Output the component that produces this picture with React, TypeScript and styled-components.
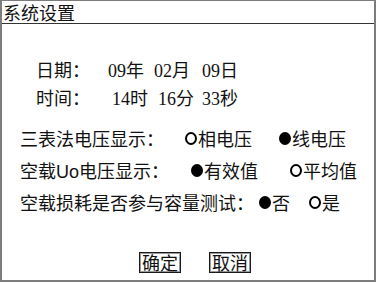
import React from "react";
import styled, { createGlobalStyle } from "styled-components";

const GlobalStyle = createGlobalStyle`
  html, body {
    margin: 0;
    padding: 0;
    background: #ffffff;
  }
  body {
    font-family: "Noto Sans CJK SC", "Liberation Sans", sans-serif;
    color: #111111;
  }
`;

const Screen = styled.div`
  width: 377px;
  height: 283px;
  overflow: hidden;
  background: #ffffff;
`;

const Window = styled.section`
  box-sizing: border-box;
  width: 376px;
  height: 282px;
  border: 2px solid #7c7c7c;
  border-top-width: 1px;
  display: flex;
  flex-direction: column;
`;

const TitleBar = styled.header`
  height: 22px;
  line-height: 22px;
  padding-left: 1px;
  font-size: 18px;
  border-bottom: 1px solid #333333;
  white-space: nowrap;
`;

const Body = styled.div`
  display: flex;
  flex-direction: column;
  padding-top: 31px;
`;

const DateRow = styled.div`
  display: flex;
  align-items: center;
  height: 28px;
  padding-left: 34px;
  font-size: 18px;
  white-space: nowrap;
`;

const Label = styled.span`
  font-size: 18px;
`;

const Field = styled.span<{ $gap: number }>`
  margin-left: ${(p) => p.$gap}px;
  font-family: "Liberation Serif", "Noto Sans CJK SC", serif;
  font-size: 18px;
`;

const OptionList = styled.div`
  display: flex;
  flex-direction: column;
  margin-top: 11px;
`;

const OptionRow = styled.div`
  display: flex;
  align-items: center;
  height: 32px;
  padding-left: 18px;
  font-size: 18px;
  white-space: nowrap;
`;

const UnitText = styled.span`
  font-family: "Liberation Sans", "Noto Sans CJK SC", sans-serif;
`;

const Choice = styled.span<{ $gap: number }>`
  display: inline-flex;
  align-items: center;
  margin-left: ${(p) => p.$gap}px;
`;

const Mark = styled.span<{ $on: boolean }>`
  box-sizing: border-box;
  display: inline-block;
  width: 12px;
  height: 13px;
  margin-right: 1px;
  border-radius: 50%;
  border: 2px solid #000000;
  background: ${(p) => (p.$on ? "#000000" : "transparent")};
`;

const ButtonBar = styled.div`
  display: flex;
  gap: 28px;
  margin-top: 34px;
  padding-left: 137px;
`;

const Button = styled.button`
  box-sizing: border-box;
  width: 42px;
  height: 21px;
  padding: 0;
  margin: 0;
  font-family: "Noto Sans CJK SC", sans-serif;
  font-size: 18px;
  line-height: 17px;
  color: #111111;
  background: #ffffff;
  border: 1px solid #1a1a1a;
  box-shadow: inset -1px -1px 0 #9a9a9a, inset 1px 1px 0 #9a9a9a;
  border-radius: 0;
`;

const Radio = ({ on, gap, text }: { on: boolean; gap: number; text: string }) => (
  <Choice $gap={gap}>
    <Mark $on={on} />
    {text}
  </Choice>
);

const App = () => {
  return (
    <Screen>
      <GlobalStyle />
      <Window>
        <TitleBar>系统设置</TitleBar>
        <Body>
          <DateRow>
            <Label>日期：</Label>
            <Field $gap={18}>09年</Field>
            <Field $gap={10}>02月</Field>
            <Field $gap={12}>09日</Field>
          </DateRow>
          <DateRow>
            <Label>时间：</Label>
            <Field $gap={22}>14时</Field>
            <Field $gap={10}>16分</Field>
            <Field $gap={8}>33秒</Field>
          </DateRow>
          <OptionList>
            <OptionRow>
              <Label>三表法电压显示：</Label>
              <Radio on={false} gap={21} text="相电压" />
              <Radio on={true} gap={27} text="线电压" />
            </OptionRow>
            <OptionRow>
              <Label>
                空载<UnitText>Uo</UnitText>电压显示：
              </Label>
              <Radio on={true} gap={22} text="有效值" />
              <Radio on={false} gap={32} text="平均值" />
            </OptionRow>
            <OptionRow>
              <Label>空载损耗是否参与容量测试：</Label>
              <Radio on={true} gap={5} text="否" />
              <Radio on={false} gap={19} text="是" />
            </OptionRow>
          </OptionList>
          <ButtonBar>
            <Button>确定</Button>
            <Button>取消</Button>
          </ButtonBar>
        </Body>
      </Window>
    </Screen>
  );
};

export default App;
